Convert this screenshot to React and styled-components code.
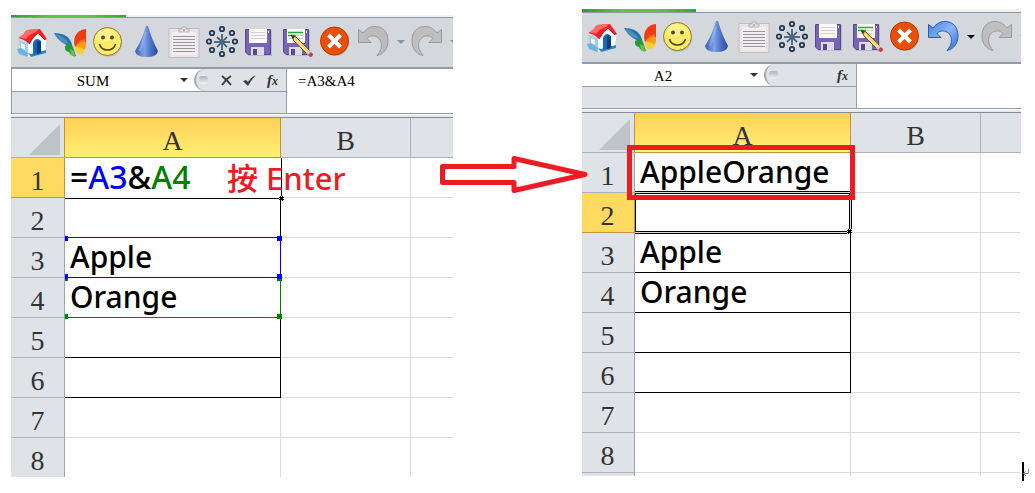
import React from 'react'
import styled, { createGlobalStyle, css } from 'styled-components'

const GlobalStyle = createGlobalStyle`
  * {
    box-sizing: border-box;
  }

  body {
    margin: 0;
    background: #fff;
  }

  button,
  input {
    font: inherit;
    color: inherit;
    border: 0;
    padding: 0;
    background: none;
    outline: none;
  }
`

const serif = '"Liberation Serif", "Noto Sans CJK TC", serif'
const sans = '"Noto Sans", "Noto Sans CJK TC", sans-serif'

const Page = styled.main`
  display: grid;
  grid-template-columns: 442fr 129fr 439fr;
  align-items: start;
  padding: 9px 14px 12px 11px;
`

const Pane = styled.section`
  overflow: hidden;
  margin-top: ${({ $drop }) => $drop}px;
`

/* the second window is cut one pixel into its left edge */
const PaneBody = styled.div`
  margin-left: ${({ $cut }) => -$cut}px;
`

const TabStrip = styled.div`
  height: ${({ $height }) => $height}px;
  background: #f0f0f1;

  &::before {
    content: '';
    display: block;
    width: 115px;
    height: 100%;
    background: linear-gradient(90deg, #2f9a35, #5cc846 35%, #5cc846 65%, #3da338);
  }
`

const Toolbar = styled.div`
  display: flex;
  height: 52px;
  padding: 8px 0 0 2px;
  border-top: 1px solid #8f99a4;
  border-bottom: 2px solid #949da7;
  background: #d4d7dc;
  overflow: hidden;
`

const ToolButton = styled.button`
  flex: none;
  width: 38px;
  height: 32px;
  display: flex;
  justify-content: center;
`

const CaretButton = styled.button`
  flex: none;
  width: 15px;
  height: 32px;
  display: flex;
  align-items: center;
  justify-content: center;
  color: ${({ $color }) => $color || '#000'};
`

const FormulaBar = styled.div`
  display: flex;
  height: 45px;
  border-bottom: 1px solid #949da7;
  border-left: 1px solid #949da7;
  font: 15px/22px ${serif};
  color: #000;
`

const NameArea = styled.div`
  flex: none;
  width: 275px;
  background: #dfe3e8;
  border-right: 1px solid #949da7;
`

const NameRow = styled.div`
  display: flex;
  height: 23px;
  background: #fff;
  border-bottom: 1px solid #949da7;
`

const NameInput = styled.input`
  width: 162px;
  height: 22px;
  padding-top: 2px;
  text-align: center;
`

const NameCaret = styled.button`
  width: 20px;
  height: 22px;
  display: flex;
  align-items: center;
  justify-content: center;
  color: #333;
`

const FxArea = styled.div`
  flex: 1;
  display: flex;
  align-items: center;
  justify-content: flex-end;
  padding-right: 2px;
  border-left: 2px solid #a2a8af;
  border-radius: 11px 0 0 11px;
  background: #dfe3e8;
`

const Knob = styled.span`
  width: 9px;
  height: 8px;
  margin-right: auto;
  margin-left: 3px;
  border-radius: 3px;
  background: linear-gradient(#aeb3b8, #f3f4f5);
`

const FxButton = styled.button`
  width: 23px;
  height: 22px;
  display: flex;
  align-items: center;
  justify-content: center;
`

const FormulaInput = styled.input`
  flex: 1;
  min-width: 0;
  height: 24px;
  padding: 0 0 0 11px;
`

const Sheet = styled.table`
  width: 100%;
  margin-top: 3px;
  border-top: 1px solid #868d95;
  border-collapse: separate;
  border-spacing: 0;
  table-layout: fixed;
  box-shadow: 0 -2px #e6eaf4;
`

const headerCell = css`
  height: 40px;
  padding: 7px 0 0;
  vertical-align: top;
  border: 0 solid ${({ $active }) => ($active ? '#c8903a' : '#adb2b8')};
  border-width: 0 1px 1px 0;
  font: 28px/32px ${serif};
  color: #333;
  text-align: center;
`

const ColHeader = styled.th`
  ${headerCell}
  background: ${({ $active }) =>
    $active ? 'linear-gradient(#ffd056, #fff074)' : '#dfe3e8'};

  &:last-child {
    border-right-width: 0;
  }
`

const RowHeader = styled.th`
  ${headerCell}
  height: ${({ $height }) => $height || 40}px;
  padding-top: ${({ $height }) => ($height < 20 ? 0 : 7)}px;
  border-right-color: ${({ $active }) => ($active ? '#c8903a' : '#9fa5ac')};
  border-bottom-width: ${({ $last }) => ($last ? 0 : 1)}px;
  background: ${({ $active }) => ($active ? '#ffda60' : '#dfe3e8')};
`

const Corner = styled.th`
  height: 40px;
  padding: 6px 4px 0 0;
  vertical-align: top;
  text-align: right;
  line-height: 0;
  background: #dfe3e8;
  border: 0 solid #adb2b8;
  border-right-color: #c8903a;
  border-width: 0 1px 1px 0;
`

const Cell = styled.td`
  position: relative;
  padding: 0 0 0 5px;
  vertical-align: top;
  border: 0 solid;
  border-width: 0 1px 1px 0;
  border-right-color: ${({ $right }) => $right || '#dadadb'};
  border-bottom-color: ${({ $bottom }) => $bottom || '#dadadb'};
  border-bottom-width: ${({ $last }) => ($last ? 0 : 1)}px;
  font: 500 30px/38px ${sans};
  color: #000;
  white-space: nowrap;
`

const EditBox = styled.div`
  position: absolute;
  inset: 0 -2px -2px 0;
  z-index: 1;
  padding-left: 5px;
  font-size: 32px;
  background: #fff;
  border: 0 solid #000;
  border-width: 0 1px 1px 0;
`

const CellRef = styled.span`
  color: ${({ $color }) => $color};
`

const Selection = styled.div`
  position: absolute;
  inset: -2px -2px -2px 0;
  z-index: 1;
  border: 3px double #000;
  border-left: 1px solid #000;
`

const Handle = styled.i`
  position: absolute;
  z-index: ${({ $z }) => $z || 1};
  width: ${({ $side }) => ($side === 'left' ? 3 : 5)}px;
  height: 5px;
  ${({ $side }) => ($side === 'left' ? 'left: 0;' : 'right: -2px;')}
  ${({ $edge }) => ($edge === 'top' ? 'top: -2px;' : 'bottom: -2px;')}
  background: ${({ $color }) => $color};
`

const FillHandle = styled.i`
  position: absolute;
  z-index: 2;
  right: -3px;
  bottom: -3px;
  width: 5px;
  height: 5px;
  background: #000;
  border: 1px dotted #fff;
`

const RedBox = styled.div`
  position: absolute;
  inset: -8px -5px -8px -8px;
  z-index: 3;
  border: 5px solid #ed1c24;
`

const Note = styled.span`
  position: absolute;
  z-index: 3;
  top: 1px;
  left: 162px;
  font-size: 31px;
  color: #ed1c24;
`

const Between = styled.div`
  position: relative;
  z-index: 4;
`

const ArrowSvg = styled.svg`
  position: absolute;
  top: 144px;
  left: -14px;
`

const TextCursor = styled.svg`
  position: absolute;
  left: calc(100% - 13px);
  top: 462px;
`

const Caret = () => (
  <svg width="8" height="4" viewBox="0 0 8 4">
    <path d="M0 0H8L4 4Z" fill="currentColor" />
  </svg>
)

const Icon = ({ children }) => (
  <svg width="32" height="32" viewBox="0 0 32 32">
    {children}
  </svg>
)

const House = () => (
  <Icon>
    <path d="M3 14L12 18V30L4 25Z" fill="#9dcdea" />
    <path d="M5 17L9 19V24L5 22Z" fill="#e9f7fd" />
    <path d="M1 23L5 22L12 27L11 31L3 28Z" fill="#69b6dd" />
    <path d="M12 17L22 6L30 14L29 27L15 31L12 30Z" fill="#f5fbff" />
    <path d="M12 27L15 31L30 27V24L15 28Z" fill="#2c86c8" />
    <path d="M17 17Q20 10 25 15V27L17 29Z" fill="#1668b0" />
    <path d="M21 15L25 16V27L21 28Z" fill="#073e80" />
    <path d="M2 12L11 4L24 3L31 13L29 14L22 7Q17 11 13 18Q8 13 2 12Z" fill="#f3202b" />
    <path d="M3 11L11 4L23 3L20 6Q13 8 10 13Z" fill="#ff6a62" />
    <path d="M2 12L8 7V3L11 4" fill="none" stroke="#c6e3f2" strokeWidth="1" />
    <path d="M13 18Q17 10 22 7L29 14" fill="none" stroke="#c61824" strokeWidth="1" />
  </Icon>
)

const Butterfly = () => (
  <Icon>
    <path d="M0 7Q12 7 16 14Q19 19 18 22Q14 20 9 17Q3 13 0 7Z" fill="#2274ad" />
    <path d="M1 8Q10 9 15 18L10 17Q4 14 1 8Z" fill="#4a8fbf" />
    <path d="M11 20Q16 16 19 21L22 30Q17 31 15 26Q10 25 11 20Z" fill="#249b38" />
    <path d="M16 23L20 25L21 31L17 29Z" fill="#6cc044" />
    <path d="M21 21Q18 13 24 6Q28 3 32 3V17Z" fill="#f03c14" />
    <path d="M22 21Q22 15 31 13L31 18Z" fill="#ff6a1c" />
    <path d="M21 21Q27 14 32 16Q33 24 27 27Q23 28 21 21Z" fill="#ff9c18" />
    <path d="M21 21Q26 20 31 24Q28 31 23 27Z" fill="#ffcf2e" />
  </Icon>
)

const Smiley = () => (
  <Icon>
    <circle cx="16" cy="17" r="14" fill="#a9a9a4" opacity=".5" />
    <circle cx="15.5" cy="15.5" r="14" fill="#fdea66" stroke="#857638" />
    <ellipse cx="14" cy="9" rx="9" ry="6" fill="#fff7a8" opacity=".6" />
    <circle cx="11" cy="11.5" r="2" fill="#5a4a1c" />
    <circle cx="20" cy="11.5" r="2" fill="#5a4a1c" />
    <path d="M7.5 18Q9 24 15.500 24T23.500 18" fill="none" stroke="#4f4218" strokeWidth="1.500" />
  </Icon>
)

const Cone = () => (
  <Icon>
    <defs>
      <linearGradient id="cone">
        <stop offset="0" stopColor="#3c5cae" />
        <stop offset=".4" stopColor="#7ea2e6" />
        <stop offset=".7" stopColor="#4a6fc4" />
        <stop offset="1" stopColor="#2c4890" />
      </linearGradient>
    </defs>
    <path d="M16 0H18Q22 14 28 25Q27 31 16.500 31T5 25Q12 14 16 0Z" fill="url(#cone)" />
    <path d="M16 6L10 25" stroke="#a9c2f2" strokeWidth="2" opacity=".5" />
  </Icon>
)

const Clipboard = () => (
  <Icon>
    <path d="M1 2.500H31V31.500H1Z" fill="#e9e4e8" stroke="#c5bbc2" />
    <path d="M4 6H28V29H4Z" fill="#f1eff1" />
    <path d="M11 6V3H14V1H18V3H21V6Z" fill="#e2dfe2" stroke="#b9b3b8" />
    <path d="M15 4H17" stroke="#8f898e" />
    <path d="M5 10.500H27M5 13.500H27M5 16.500H27M5 19.500H27M5 22.500H27M5 25.500H27" stroke="#97959a" />
  </Icon>
)

const ringSpots = [[16, 3], [26, 7], [29, 15.5], [26, 24], [16, 28], [6, 24], [3, 15.5], [6, 7]]

const Burst = () => (
  <Icon>
    {ringSpots.map(([x, y]) => (
      <circle key={`${x}-${y}`} cx={x} cy={y} r="2.2" fill="#c9d8e6" stroke="#24384e" strokeWidth="1.800" />
    ))}
    <path d="M16 8V24M8 16H24M11 11L21 21M21 11L11 21" stroke="#2d4a66" strokeWidth="1.500" />
    <circle cx="16" cy="16" r="2.500" fill="#46688a" />
  </Icon>
)

const Disk = () => (
  <>
    <path d="M3 4H28V30H5L2 27Z" fill="#9ea1ad" opacity=".5" />
    <path d="M1.500 3.500H26.500V28.500H4L1.500 26Z" fill="#7764b4" stroke="#5a4694" />
    <path d="M5 3H23V17H5Z" fill="#fafafa" />
    <path d="M7 6.500H21M7 9.500H21M7 12.500H21" stroke="#cfcfd4" />
    <path d="M7 21H20V29H7Z" fill="#dcdce4" />
    <path d="M9 23H13V29H9Z" fill="#5a4694" />
    <path d="M24 5H25V7H24Z" fill="#e4dff5" />
  </>
)

const Save = () => (
  <Icon>
    <Disk />
  </Icon>
)

const SaveEdit = () => (
  <Icon>
    <Disk />
    <path d="M6 6.500H21M6 9.500H14" stroke="#20b032" strokeWidth="1.400" />
    <path d="M9 9L14 11L28 25L25 28L12 15Z" fill="#f4cf6a" stroke="#6f5420" />
    <path d="M12 13L26 27" stroke="#fff0ae" />
    <path d="M9 9L13 10.500L11 13Z" fill="#3c3226" />
    <path d="M24 27L27 24L29 26L26 29Z" fill="#c9ced3" />
    <path d="M26 29L29 26L31 28Q31 31 28 31Z" fill="#c3404a" />
  </Icon>
)

const Close = () => (
  <Icon>
    <circle cx="15" cy="16" r="14" fill="#90979e" opacity=".6" />
    <circle cx="14.500" cy="15" r="14" fill="#e94f0a" stroke="#b93a08" />
    <path d="M8.500 9L20.500 21M20.500 9L8.500 21" stroke="#fff" strokeWidth="4" />
  </Icon>
)

const arrowPath =
  'M.5 3.500L5 7C9 2 13 .5 17 .5C25 .5 30 6 30 15C30 22 26 28 19 29.500C24 24 25 17 21 12.500C17 9 12 9 9 12.500L13 16.500H.5Z'

const Undo = ({ on }) => (
  <Icon>
    <defs>
      <linearGradient id="undoBlue" x1="0" y1="0" x2="1" y2="1">
        <stop offset="0" stopColor="#3f7fe0" />
        <stop offset=".5" stopColor="#8bb6f6" />
        <stop offset="1" stopColor="#2f6cd0" />
      </linearGradient>
    </defs>
    <path d={arrowPath} fill={on ? 'url(#undoBlue)' : '#bcbcbf'} stroke={on ? '#2a5db8' : '#98989c'} />
  </Icon>
)

const Redo = () => (
  <Icon>
    <path d={arrowPath} transform="matrix(-1 0 0 1 31 0)" fill="#bfbfc2" stroke="#9a9a9e" />
  </Icon>
)

const Cancel = () => (
  <svg width="11" height="11" viewBox="0 0 11 11">
    <path d="M1 1Q6 5 10 10M10 1Q5 4 1 10" fill="none" stroke="#3a3d41" strokeWidth="2" />
  </svg>
)

const Accept = () => (
  <svg width="13" height="11" viewBox="0 0 13 11">
    <path d="M0 6L3 5L5 7Q8 2 13 0Q8 5 5 11Z" fill="#3a3d41" />
  </svg>
)

const FxLabel = styled.em`
  font: italic bold 15px/18px ${serif};
  color: #333;

  small {
    font-size: 12px;
  }
`

const tools = [
  ['Home', House],
  ['Butterfly', Butterfly],
  ['Smiley', Smiley],
  ['Cone', Cone],
  ['Paste', Clipboard],
  ['Burst', Burst],
  ['Save', Save],
  ['Save as', SaveEdit],
  ['Close', Close],
]

function QuickTools({ canUndo }) {
  return (
    <Toolbar>
      {tools.map(([label, Drawing]) => (
        <ToolButton key={label} type="button" aria-label={label}>
          <Drawing />
        </ToolButton>
      ))}
      <ToolButton type="button" aria-label="Undo">
        <Undo on={canUndo} />
      </ToolButton>
      <CaretButton type="button" aria-label="Undo list" $color={canUndo ? '#000' : '#8d9094'}>
        <Caret />
      </CaretButton>
      <ToolButton type="button" aria-label="Redo">
        <Redo />
      </ToolButton>
      <CaretButton type="button" aria-label="Redo list" $color="#8d9094">
        <Caret />
      </CaretButton>
    </Toolbar>
  )
}

function Formula({ name, value, editing }) {
  return (
    <FormulaBar>
      <NameArea>
        <NameRow>
          <NameInput aria-label="Name box" defaultValue={name} />
          <NameCaret type="button" aria-label="Names">
            <Caret />
          </NameCaret>
          <FxArea>
            <Knob />
            {editing && (
              <>
                <FxButton type="button" aria-label="Cancel">
                  <Cancel />
                </FxButton>
                <FxButton type="button" aria-label="Accept">
                  <Accept />
                </FxButton>
              </>
            )}
            <FxButton type="button" aria-label="Insert function">
              <FxLabel>
                f<small>x</small>
              </FxLabel>
            </FxButton>
          </FxArea>
        </NameRow>
      </NameArea>
      <FormulaInput aria-label="Formula" defaultValue={value} />
    </FormulaBar>
  )
}

function RefHandles({ color, z }) {
  return (
    <>
      <Handle $color={color} $z={z} $side="left" $edge="top" />
      <Handle $color={color} $z={z} $side="right" $edge="top" />
      <Handle $color={color} $z={z} $side="left" $edge="bottom" />
      <Handle $color={color} $z={z} $side="right" $edge="bottom" />
    </>
  )
}

const HeadCol = styled.col`
  width: 54px;
`

const WideCol = styled.col`
  width: 216px;
`

const MidCol = styled.col`
  width: 130px;
`

function Grid({ rows, activeRow }) {
  return (
    <Sheet>
      <colgroup>
        <HeadCol />
        <WideCol />
        <MidCol />
        <col />
      </colgroup>
      <thead>
        <tr>
          <Corner>
            <svg width="31" height="31" viewBox="0 0 31 31">
              <path d="M31 0V31H0Z" fill="#bec3c7" />
            </svg>
          </Corner>
          <ColHeader $active>A</ColHeader>
          <ColHeader>B</ColHeader>
          <ColHeader />
        </tr>
      </thead>
      <tbody>
        {rows.map((row, i) => {
          const last = i === rows.length - 1
          return (
            <tr key={i}>
              <RowHeader $active={activeRow === i + 1} $height={row.height} $last={last}>
                {row.label}
              </RowHeader>
              <Cell $right={row.right} $bottom={row.bottom} $last={last}>
                {row.content}
              </Cell>
              <Cell $last={last} />
              <Cell $last={last} $right="transparent" />
            </tr>
          )
        })}
      </tbody>
    </Sheet>
  )
}

const before = [
  {
    label: 1,
    content: (
      <>
        <EditBox>
          =<CellRef $color="#0000ff">A3</CellRef>&amp;<CellRef $color="#008000">A4</CellRef>
          <FillHandle />
        </EditBox>
        <Note>按 Enter</Note>
      </>
    ),
  },
  { label: 2, right: '#000', bottom: '#0000ff' },
  {
    label: 3,
    right: '#0000ff',
    bottom: '#0000ff',
    content: (
      <>
        Apple
        <RefHandles color="#0000ff" z={2} />
      </>
    ),
  },
  {
    label: 4,
    right: '#008000',
    bottom: '#008000',
    content: (
      <>
        Orange
        <RefHandles color="#008000" z={1} />
      </>
    ),
  },
  { label: 5, right: '#000', bottom: '#000' },
  { label: 6, right: '#000', bottom: '#000' },
  { label: 7 },
  { label: 8, height: 39 },
]

const after = [
  {
    label: 1,
    right: '#000',
    content: (
      <>
        AppleOrange
        <RedBox />
      </>
    ),
  },
  {
    label: 2,
    content: (
      <Selection>
        <FillHandle />
      </Selection>
    ),
  },
  { label: 3, right: '#000', bottom: '#000', content: 'Apple' },
  { label: 4, right: '#000', bottom: '#000', content: 'Orange' },
  { label: 5, right: '#000', bottom: '#000' },
  { label: 6, right: '#000', bottom: '#000' },
  { label: 7 },
  { label: 8 },
  { label: '', height: 3 },
]

export default function App() {
  return (
    <>
      <GlobalStyle />
      <Page>
        <Pane $drop={6}>
          <PaneBody $cut={0}>
            <TabStrip $height={2} />
            <QuickTools />
            <Formula name="SUM" value="=A3&A4" editing />
            <Grid rows={before} activeRow={1} />
          </PaneBody>
        </Pane>

        <Between>
          <ArrowSvg width="150" height="42" viewBox="0 0 150 42">
            <path
              d="M3.500 13.500H75V5.500L146 21.500L75 37.500V29.500H3.500Z"
              fill="#fff"
              stroke="#ed1c24"
              strokeWidth="5"
              strokeLinejoin="round"
            />
          </ArrowSvg>
        </Between>

        <Pane $drop={0}>
          <PaneBody $cut={1}>
            <TabStrip $height={3} />
            <QuickTools canUndo />
            <Formula name="A2" value="" />
            <Grid rows={after} activeRow={2} />
          </PaneBody>
        </Pane>
      </Page>
      <TextCursor width="8" height="19" viewBox="0 0 8 19">
        <path d="M0 0H2V19H0Z" fill="#000" />
        <path d="M6.500 7V11.500H2M4 9L1.500 11.500L4 14" fill="none" stroke="#8a8a8a" />
      </TextCursor>
    </>
  )
}
